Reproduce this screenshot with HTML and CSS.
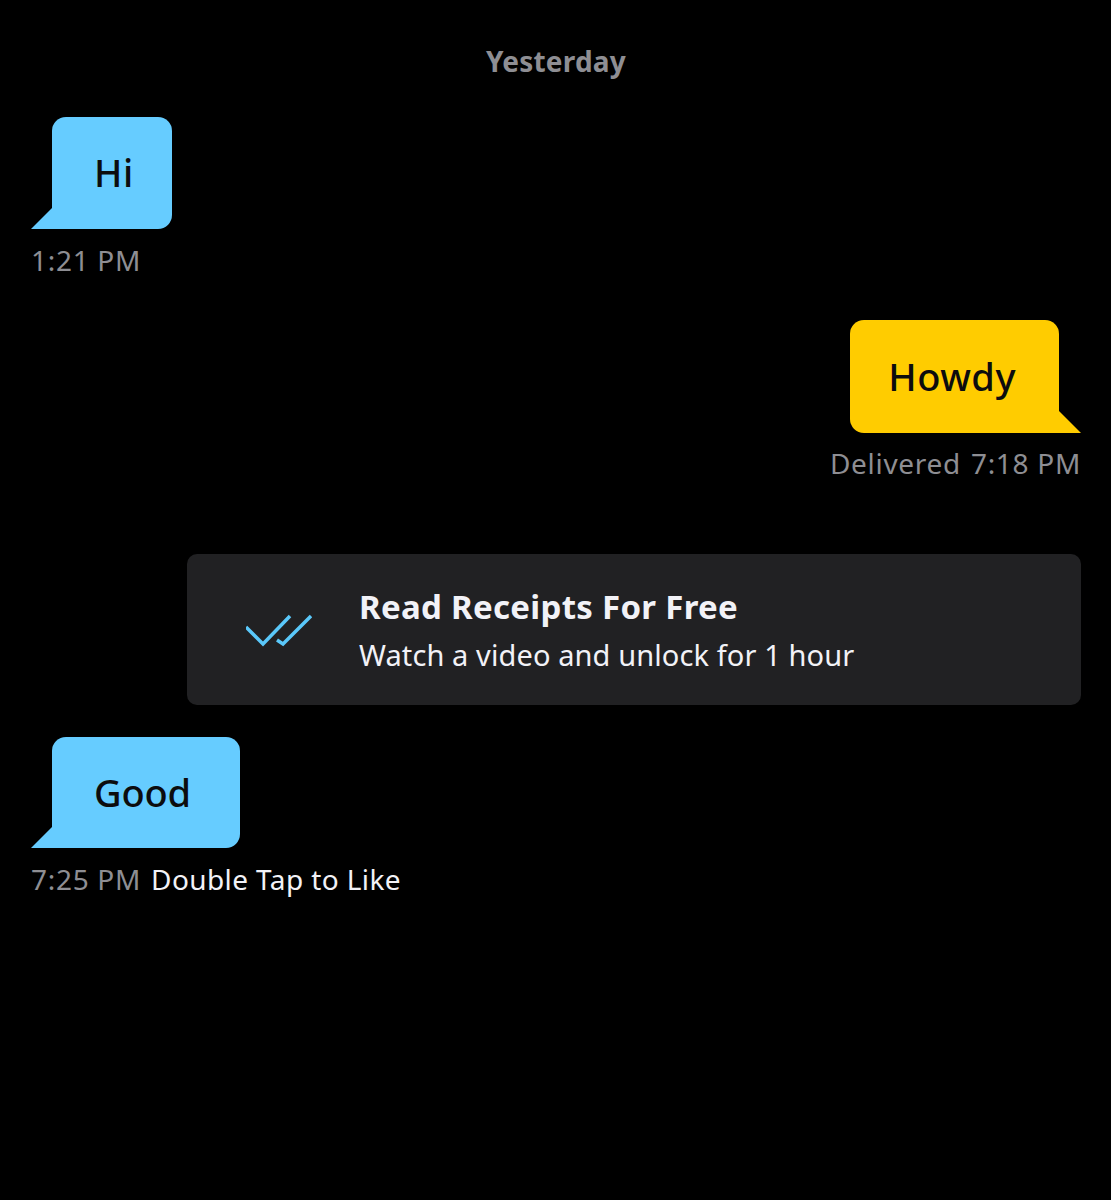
FILE: index.html
```html
<!DOCTYPE html>
<html>

<head>
  <meta charset="UTF-8">
  <meta name="viewport" content="width=device-width, initial-scale=1.0">
  <title>Chat</title>
  <link rel="stylesheet" href="styles.css">
</head>

<body>
  <div class="chat">
    <div class="day">Yesterday</div>

    <div class="msg msg-in msg-hi">
      <div class="bubble bubble-blue">Hi</div>
      <div class="meta"><span class="time">1:21 PM</span></div>
    </div>

    <div class="msg msg-out msg-howdy">
      <div class="bubble bubble-yellow">Howdy</div>
      <div class="meta"><span class="time">Delivered</span><span class="time">7:18 PM</span></div>
    </div>

    <div class="promo">
      <svg class="promo-icon" width="66" height="34" viewBox="0 0 66 34" fill="none">
        <path d="M0 14 L17 31 L44 3" />
        <path d="M31 27 L37 31 L65 3" />
      </svg>
      <div class="promo-text">
        <div class="promo-title">Read Receipts For Free</div>
        <div class="promo-sub">Watch a video and unlock for 1 hour</div>
      </div>
    </div>

    <div class="msg msg-in msg-good">
      <div class="bubble bubble-blue">Good</div>
      <div class="meta"><span class="time">7:25 PM</span><span class="hint">Double Tap to Like</span></div>
    </div>
  </div>
</body>

</html>
```

FILE: styles.css
```css
body * {
  box-sizing: border-box;
}

html,
body {
  background: #000;
}

body {
  margin: 0;
  font-family: "Noto Sans", Arial, sans-serif;
  color: #fff;
}

.chat {
  display: flex;
  flex-direction: column;
  min-height: 1200px;
  padding: 42px 30px 0 31px;
}

.day {
  height: 38px;
  line-height: 38px;
  text-align: center;
  font-size: 28px;
  font-weight: 700;
  letter-spacing: 0.2px;
  color: #8e8e93;
}

.msg {
  display: flex;
  flex-direction: column;
}

.msg-in {
  align-items: flex-start;
  padding-left: 21px;
}

.msg-out {
  align-items: flex-end;
  padding-right: 22px;
}

.msg-hi {
  margin-top: 37px;
}

.msg-howdy {
  margin-top: 42px;
}

.msg-good {
  margin-top: 32px;
}

.bubble {
  position: relative;
  height: 112px;
  line-height: 110px;
  padding: 0 38px 0 42px;
  font-size: 38px;
  font-weight: 500;
  letter-spacing: 0.5px;
  border-radius: 14px;
  color: #0c0c0e;
}

.msg-howdy .bubble {
  height: 113px;
  line-height: 112px;
  padding: 0 43px 0 38px;
}

.msg-good .bubble {
  height: 111px;
  padding-right: 49px;
  letter-spacing: -0.2px;
}

.bubble-blue {
  background: #66ccff;
  border-bottom-left-radius: 0;
}

.bubble-yellow {
  background: #ffcc00;
  border-bottom-right-radius: 0;
}

.bubble::after {
  content: "";
  position: absolute;
  bottom: 0;
  width: 22px;
  height: 22px;
}

.bubble-blue::after {
  left: -21px;
  background: #66ccff;
  clip-path: polygon(100% 0, 100% 100%, 0 100%);
}

.bubble-yellow::after {
  right: -22px;
  background: #ffcc00;
  clip-path: polygon(0 0, 100% 100%, 0 100%);
}

.meta {
  display: flex;
  gap: 10px;
  height: 36px;
  line-height: 36px;
  margin-top: 13px;
  font-size: 28px;
  letter-spacing: 0.4px;
  white-space: nowrap;
}

.msg-howdy .meta {
  margin-top: 12px;
}

.msg-in .meta {
  margin-left: -21px;
}

.msg-out .meta {
  margin-right: -22px;
}

.time {
  letter-spacing: 0.7px;
  color: #8e8e93;
}

.hint {
  color: #f2f2f7;
}

.promo {
  display: flex;
  align-items: center;
  gap: 47px;
  height: 151px;
  margin-top: 73px;
  margin-left: 156px;
  padding-left: 59px;
  background: #212123;
  border-radius: 10px;
}

.promo-icon {
  flex: none;
}

.promo-icon path {
  stroke: #5ac8fa;
  stroke-width: 3.5;
}

.promo-text {
  padding-top: 3px;
}

.promo-title {
  height: 48px;
  line-height: 48px;
  font-size: 33px;
  font-weight: 700;
  letter-spacing: 0.3px;
  color: #f2f2f7;
}

.promo-sub {
  height: 48px;
  line-height: 48px;
  font-size: 29px;
  letter-spacing: 0.1px;
  color: #f2f2f7;
}
```
